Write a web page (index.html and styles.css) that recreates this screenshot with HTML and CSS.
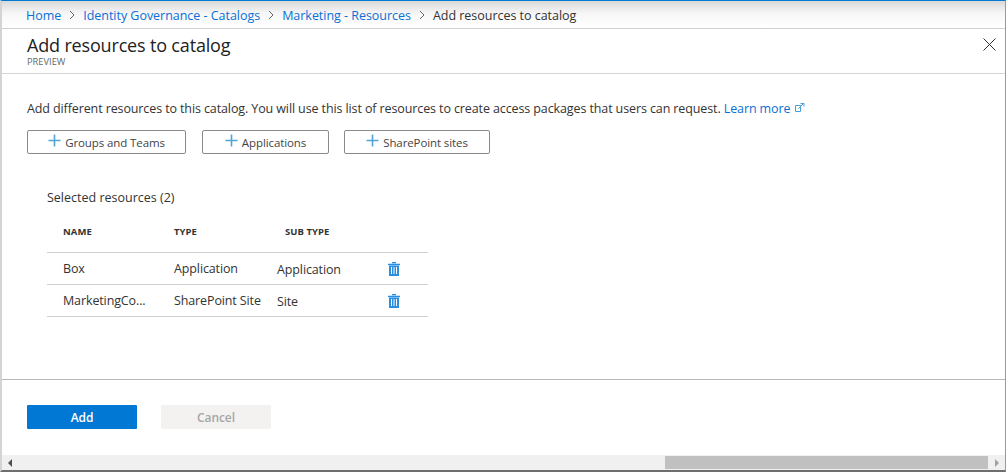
FILE: index.html
```html
<!DOCTYPE html>
<html lang="en">
<head>
<meta charset="UTF-8">
<title>Add resources to catalog</title>
<link rel="stylesheet" href="styles.css">
</head>
<body>
<div class="window">
    <nav class="breadcrumb">
        <a href="#">Home</a>
        <svg class="crumb-sep" width="6" height="10" viewBox="0 0 6 10"><path d="M1 1l4 4-4 4" fill="none" stroke="#666" stroke-width="1"/></svg>
        <a href="#">Identity Governance - Catalogs</a>
        <svg class="crumb-sep" width="6" height="10" viewBox="0 0 6 10"><path d="M1 1l4 4-4 4" fill="none" stroke="#666" stroke-width="1"/></svg>
        <a href="#">Marketing - Resources</a>
        <svg class="crumb-sep" width="6" height="10" viewBox="0 0 6 10"><path d="M1 1l4 4-4 4" fill="none" stroke="#666" stroke-width="1"/></svg>
        <span>Add resources to catalog</span>
    </nav>

    <header class="blade-header">
        <div>
            <h1>Add resources to catalog</h1>
            <div class="preview">PREVIEW</div>
        </div>
        <svg class="close" width="13" height="13" viewBox="0 0 13 13"><path d="M.5.5l12 12M12.500.5l-12 12" fill="none" stroke="#333" stroke-width="1"/></svg>
    </header>

    <main class="blade-body">
        <p class="intro">Add different resources to this catalog. You will use this list of resources to create access packages that users can request. <a href="#">Learn more</a>
            <svg class="ext" width="10" height="10" viewBox="0 0 10 10"><path d="M.5 2.500h5v6h-5zM3.500 5.500l5-5M5.500.5h3.500v3" fill="none" stroke="#4a9fd8" stroke-width="1"/></svg>
        </p>

        <div class="actions">
            <button class="btn-outline btn-groups"><svg class="plus" width="13" height="13" viewBox="0 0 13 13"><path d="M6.500.5v12M.5 6.500h12" stroke="#4fa6d6" stroke-width="1.600"/></svg>Groups and Teams</button>
            <button class="btn-outline btn-apps"><svg class="plus" width="13" height="13" viewBox="0 0 13 13"><path d="M6.500.5v12M.5 6.500h12" stroke="#4fa6d6" stroke-width="1.600"/></svg>Applications</button>
            <button class="btn-outline btn-sites"><svg class="plus" width="13" height="13" viewBox="0 0 13 13"><path d="M6.500.5v12M.5 6.500h12" stroke="#4fa6d6" stroke-width="1.600"/></svg>SharePoint sites</button>
        </div>

        <section class="selected">
            <h2>Selected resources (2)</h2>
            <div class="res-table">
                <div class="res-row res-head">
                    <div class="c-name">NAME</div>
                    <div class="c-type">TYPE</div>
                    <div class="c-sub">SUB TYPE</div>
                </div>
                <div class="res-row">
                    <div class="c-name">Box</div>
                    <div class="c-type">Application</div>
                    <div class="c-sub-val">Application</div>
                    <svg class="trash" width="12" height="14" viewBox="0 0 12 14"><path d="M4 .5h4M0 2.500h12" stroke="#2b8fe0" stroke-width="1.400" fill="none"/><path d="M1 3.500h10V14H1z" fill="#2b8fe0"/><path d="M3.500 5v7M6 5v7M8.500 5v7" stroke="#fff" stroke-width="1"/></svg>
                </div>
                <div class="res-row">
                    <div class="c-name">MarketingCo...</div>
                    <div class="c-type">SharePoint Site</div>
                    <div class="c-sub-val">Site</div>
                    <svg class="trash" width="12" height="14" viewBox="0 0 12 14"><path d="M4 .5h4M0 2.500h12" stroke="#2b8fe0" stroke-width="1.400" fill="none"/><path d="M1 3.500h10V14H1z" fill="#2b8fe0"/><path d="M3.500 5v7M6 5v7M8.500 5v7" stroke="#fff" stroke-width="1"/></svg>
                </div>
            </div>
        </section>
    </main>

    <footer class="blade-footer">
        <button class="btn-primary">Add</button>
        <button class="btn-disabled">Cancel</button>
    </footer>

    <div class="hscroll">
        <span class="arrow-left"></span>
        <div class="track"><div class="thumb"></div></div>
        <span class="arrow-right"></span>
    </div>
</div>
</body>
</html>
```

FILE: styles.css
```css
html, body {
    margin: 0;
    padding: 0;
}
body {
    font-family: "Open Sans", "Noto Sans", sans-serif;
    font-size: 12.500px;
    color: #333;
    background: #fff;
}
a {
    color: #0b6fd6;
    text-decoration: none;
}
.window {
    width: 1006px;
    height: 472px;
    box-sizing: border-box;
    display: flex;
    flex-direction: column;
    border-top: 1px solid #0078d4;
    border-left: 2px solid #d4d4d4;
    border-right: 1px solid #9a9a9a;
    border-bottom: 2px solid #6e6e6e;
    overflow: hidden;
}
.breadcrumb {
    height: 28px;
    box-sizing: border-box;
    display: flex;
    align-items: center;
    gap: 7px;
    padding: 1px 0 0 24px;
    background: linear-gradient(#d9d9d9, #f6f6f6 45%, #fff);
    border-bottom: 1px solid #d0d0d0;
    letter-spacing: -0.03px;
}
.crumb-sep {
    margin: 0 1px;
}
.blade-header {
    height: 45px;
    box-sizing: border-box;
    display: flex;
    justify-content: space-between;
    padding: 5px 9px 0 25px;
    border-bottom: 1px solid #d6d6d6;
}
.blade-header h1 {
    margin: 0;
    font-size: 18px;
    font-weight: 400;
    line-height: 22px;
    color: #222;
    letter-spacing: -0.17px;
}
.preview {
    font-size: 9.300px;
    line-height: 12px;
    color: #666;
}
.close {
    margin-top: 4px;
}
.blade-body {
    flex: 1;
    padding: 0 0 0 25px;
}
.intro {
    margin: 27px 0 0;
    line-height: 16px;
    letter-spacing: -0.11px;
    white-space: nowrap;
}
.ext {
    margin-left: 1px;
}
.actions {
    display: flex;
    gap: 15px;
    margin-top: 13px;
}
.btn-outline {
    height: 24px;
    padding: 0;
    display: flex;
    align-items: center;
    justify-content: center;
    gap: 4px;
    background: #fff;
    border: 1px solid #8a8a8a;
    border-radius: 2px;
    font: inherit;
    font-size: 11.500px;
    color: #444;
    letter-spacing: -0.1px;
}
.plus {
    margin-bottom: 3px;
}
.btn-groups { width: 159px; }
.btn-apps { width: 127px; margin-left: 1px; }
.btn-sites { width: 146px; }
.selected {
    margin: 36px 0 0 20px;
    width: 381px;
}
.selected h2 {
    margin: 0;
    font-size: 12.500px;
    font-weight: 400;
    line-height: 16px;
}
.res-table {
    margin-top: 9px;
}
.res-row {
    height: 32px;
    box-sizing: border-box;
    display: flex;
    align-items: center;
    border-bottom: 1px solid #cfcfcf;
    letter-spacing: -0.12px;
}
.res-head {
    height: 38px;
    font-size: 9.500px;
    font-weight: 700;
    letter-spacing: 0.05px;
    padding-bottom: 4px;
}
.c-name {
    width: 111px;
    margin-left: 16px;
}
.c-type {
    width: 103px;
}
.c-sub {
    margin-left: 8px;
}
.c-sub-val {
    width: 111px;
    padding-top: 1px;
}
.trash {
    flex: none;
}
.blade-footer {
    height: 76px;
    box-sizing: border-box;
    display: flex;
    gap: 24px;
    padding: 25px 0 0 25px;
    border-top: 1px solid #b8b8b8;
}
.btn-primary, .btn-disabled {
    width: 110px;
    height: 24px;
    border: 0;
    border-radius: 1px;
    font: inherit;
    font-size: 12px;
    font-weight: 600;
    letter-spacing: -0.1px;
}
.btn-primary {
    background: #0078d4;
    color: #fff;
}
.btn-disabled {
    background: #f3f2f1;
    color: #a6a6a6;
}
.hscroll {
    height: 15px;
    display: flex;
    align-items: center;
    background: #f0f0f0;
}
.arrow-left {
    width: 0;
    height: 0;
    margin-left: 6px;
    border-style: solid;
    border-width: 4px 4px 4px 0;
    border-color: transparent #505050 transparent transparent;
}
.track {
    flex: 1;
    height: 13px;
    padding-left: 653px;
    padding-right: 7px;
}
.thumb {
    height: 100%;
    background: #c0c0c0;
}
.arrow-right {
    width: 0;
    height: 0;
    margin-right: 6px;
    border-style: solid;
    border-width: 4px 0 4px 4px;
    border-color: transparent transparent transparent #a0a0a0;
}
```
